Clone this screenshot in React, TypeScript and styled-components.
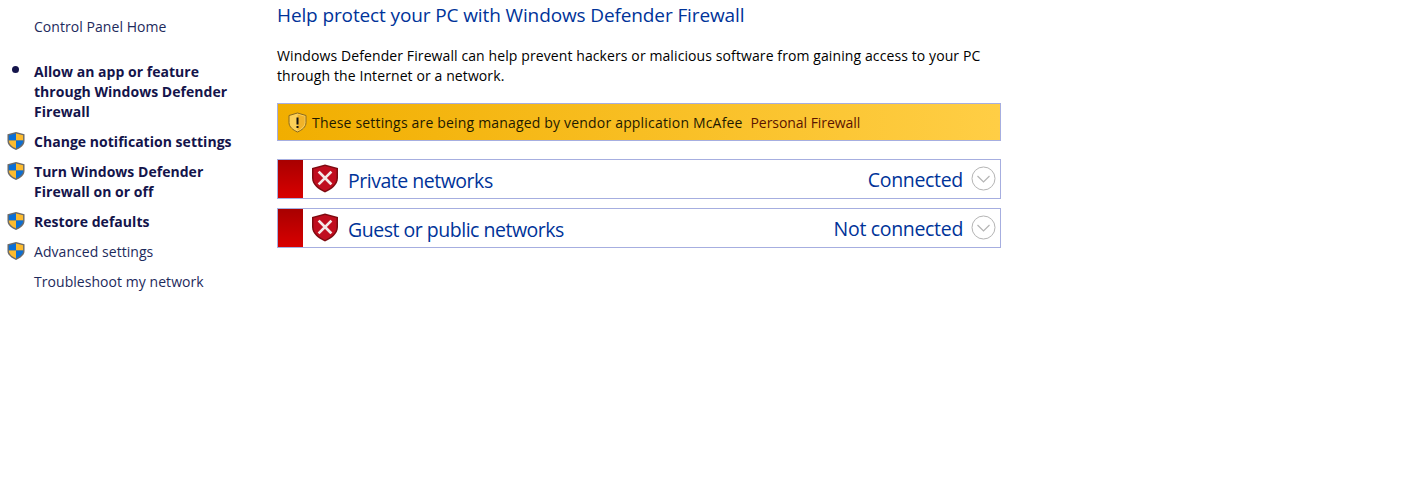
import styled, { createGlobalStyle } from "styled-components";

const GlobalStyle = createGlobalStyle`
    html, body {
        margin: 0;
        padding: 0;
        background: #ffffff;
    }
    body {
        font-family: "Open Sans", "Noto Sans", sans-serif;
        font-size: 14px;
    }
`;

const Page = styled.div`
    width: 1401px;
    height: 502px;
    display: flex;
    overflow: hidden;
`;

const Sidebar = styled.nav`
    width: 277px;
    flex-shrink: 0;
    padding-top: 17px;
    display: flex;
    flex-direction: column;
    gap: 10px;
`;

const SideItem = styled.div<{ $home?: boolean }>`
    display: flex;
    align-items: flex-start;
    padding-left: 6px;
    margin-bottom: ${({ $home }) => ($home ? "15px" : "0")};
`;

const IconSlot = styled.div`
    width: 28px;
    height: 20px;
    flex-shrink: 0;
`;

const Bullet = styled.span`
    display: block;
    width: 7px;
    height: 7px;
    margin: 4px 0 0 6px;
    border-radius: 50%;
    background: #14144b;
`;

const SideLink = styled.a<{ $bold?: boolean }>`
    width: 205px;
    font-size: 14px;
    line-height: 20px;
    letter-spacing: ${({ $bold }) => ($bold ? "0.03px" : "0.05px")};
    font-weight: ${({ $bold }) => ($bold ? 700 : 400)};
    color: ${({ $bold }) => ($bold ? "#14144b" : "#1d2a5c")};
`;

const Main = styled.main`
    width: 724px;
    flex-shrink: 0;
`;

const Title = styled.h1`
    margin: 3px 0 0;
    font-size: 19px;
    line-height: 24px;
    font-weight: 400;
    letter-spacing: -0.12px;
    color: #003399;
`;

const Description = styled.p`
    margin: 19px 0 0;
    width: 720px;
    font-size: 14px;
    line-height: 20px;
    letter-spacing: 0.1px;
    color: #000000;
`;

const Banner = styled.div`
    margin-top: 17px;
    height: 36px;
    display: flex;
    align-items: center;
    gap: 5px;
    padding-left: 10px;
    border: 1px solid #a6aee0;
    background: linear-gradient(to right, #f1ae00, #ffce45);
    font-size: 14px;
    letter-spacing: 0.18px;
    color: #1e1a00;
`;

const Vendor = styled.span`
    color: #5a1400;
    margin-left: 4px;
    letter-spacing: -0.05px;
`;

const NetworkList = styled.div`
    margin-top: 18px;
    display: flex;
    flex-direction: column;
    gap: 9px;
`;

const NetworkRow = styled.div`
    height: 38px;
    display: flex;
    align-items: center;
    border: 1px solid #a6aee0;
    color: #003399;
`;

const StatusBlock = styled.div`
    width: 25px;
    height: 38px;
    flex-shrink: 0;
    background: linear-gradient(to bottom, #a80000, #d90000);
`;

const NetworkShield = styled.svg`
    margin-left: 8px;
    margin-top: -2px;
    flex-shrink: 0;
`;

const NetworkName = styled.span`
    margin-left: 9px;
    margin-top: 3px;
    flex: 1;
    letter-spacing: -0.48px;
    font-size: 19.5px;
`;

const NetworkState = styled.span`
    margin-top: 1px;
    margin-right: 8px;
    letter-spacing: -0.32px;
    font-size: 19.5px;
`;

const Chevron = styled.svg`
    margin-right: 4px;
    margin-top: -2px;
    flex-shrink: 0;
`;

const UacIcon = styled.svg`
    display: block;
    margin: -1px 0 0 1px;
`;

function UacShield() {
  return (
    <UacIcon width="18" height="20" viewBox="0 0 19 20">
      <path d="M9.5 0.5 L18.5 3 V10 C18.5 14.5 14 17.5 9.5 19.5 C5 17.5 0.5 14.5 0.5 10 V3 Z" fill="#6b6b6b" />
      <path d="M9.5 2 V9.5 H2 V4 Z" fill="#0a6fd6" />
      <path d="M9.5 2 L17 4 V9.5 H9.5 Z" fill="#fdbb2d" />
      <path d="M2 9.5 H9.5 V17.8 C6 16.2 2.3 14 2 10 Z" fill="#fdbb2d" />
      <path d="M9.5 9.5 H17 V10 C16.7 14 13 16.2 9.5 17.8 Z" fill="#0a6fd6" />
    </UacIcon>
  );
}

function WarningShield() {
  return (
    <svg width="19" height="21" viewBox="0 0 19 21">
      <path d="M9.5 1 L18 3.5 V10.5 C18 15 14 18 9.5 20 C5 18 1 15 1 10.5 V3.5 Z" fill="#fdd058" stroke="#8a6a20" strokeWidth="1" />
      <path d="M9.5 2.6 L16.6 4.6 V10.5 C16.6 14 13.4 16.6 9.5 18.4 Z" fill="#f1b32a" />
      <rect x="8.5" y="5.5" width="2" height="7" fill="#111111" />
      <rect x="8.5" y="14" width="2" height="2" fill="#111111" />
    </svg>
  );
}

function DangerShield() {
  return (
    <NetworkShield width="28" height="29" viewBox="0 0 28 29">
      <path d="M14 0.5 L27 4 V14 C27 21 20.5 25.5 14 28.5 C7.5 25.5 1 21 1 14 V4 Z" fill="#7d0a10" />
      <path d="M14 2 L25.5 5 V14 C25.5 20 20 24 14 27 C8 24 2.5 20 2.5 14 V5 Z" fill="#c00d1e" />
      <path d="M8.5 8.5 L19.5 19.5 M19.5 8.5 L8.5 19.5" stroke="#f4e8e8" strokeWidth="2.6" strokeLinecap="square" />
    </NetworkShield>
  );
}

function ExpandChevron() {
  return (
    <Chevron width="25" height="25" viewBox="0 0 25 25">
      <circle cx="12.5" cy="12.5" r="11.5" fill="#ffffff" stroke="#b4b4b4" strokeWidth="1" />
      <path d="M6.5 10 L12.5 16 L18.5 10" fill="none" stroke="#b4b4b4" strokeWidth="1.2" />
    </Chevron>
  );
}

const sideLinks = [
  { label: "Allow an app or feature through Windows Defender Firewall", bold: true, icon: "bullet" },
  { label: "Change notification settings", bold: true, icon: "shield" },
  { label: "Turn Windows Defender Firewall on or off", bold: true, icon: "shield" },
  { label: "Restore defaults", bold: true, icon: "shield" },
  { label: "Advanced settings", bold: false, icon: "shield" },
  { label: "Troubleshoot my network", bold: false, icon: "none" },
];

const networks = [
  { name: "Private networks", state: "Connected" },
  { name: "Guest or public networks", state: "Not connected" },
];

export default function App() {
  return (
    <Page>
      <GlobalStyle />
      <Sidebar>
        <SideItem $home>
          <IconSlot />
          <SideLink>Control Panel Home</SideLink>
        </SideItem>
        {sideLinks.map((link) => (
          <SideItem key={link.label}>
            <IconSlot>
              {link.icon === "bullet" && <Bullet />}
              {link.icon === "shield" && <UacShield />}
            </IconSlot>
            <SideLink $bold={link.bold}>{link.label}</SideLink>
          </SideItem>
        ))}
      </Sidebar>
      <Main>
        <Title>Help protect your PC with Windows Defender Firewall</Title>
        <Description>
          Windows Defender Firewall can help prevent hackers or malicious software from gaining access to your PC
          through the Internet or a network.
        </Description>
        <Banner>
          <WarningShield />
          <span>
            These settings are being managed by vendor application McAfee <Vendor>Personal Firewall</Vendor>
          </span>
        </Banner>
        <NetworkList>
          {networks.map((network) => (
            <NetworkRow key={network.name}>
              <StatusBlock />
              <DangerShield />
              <NetworkName>{network.name}</NetworkName>
              <NetworkState>{network.state}</NetworkState>
              <ExpandChevron />
            </NetworkRow>
          ))}
        </NetworkList>
      </Main>
    </Page>
  );
}
